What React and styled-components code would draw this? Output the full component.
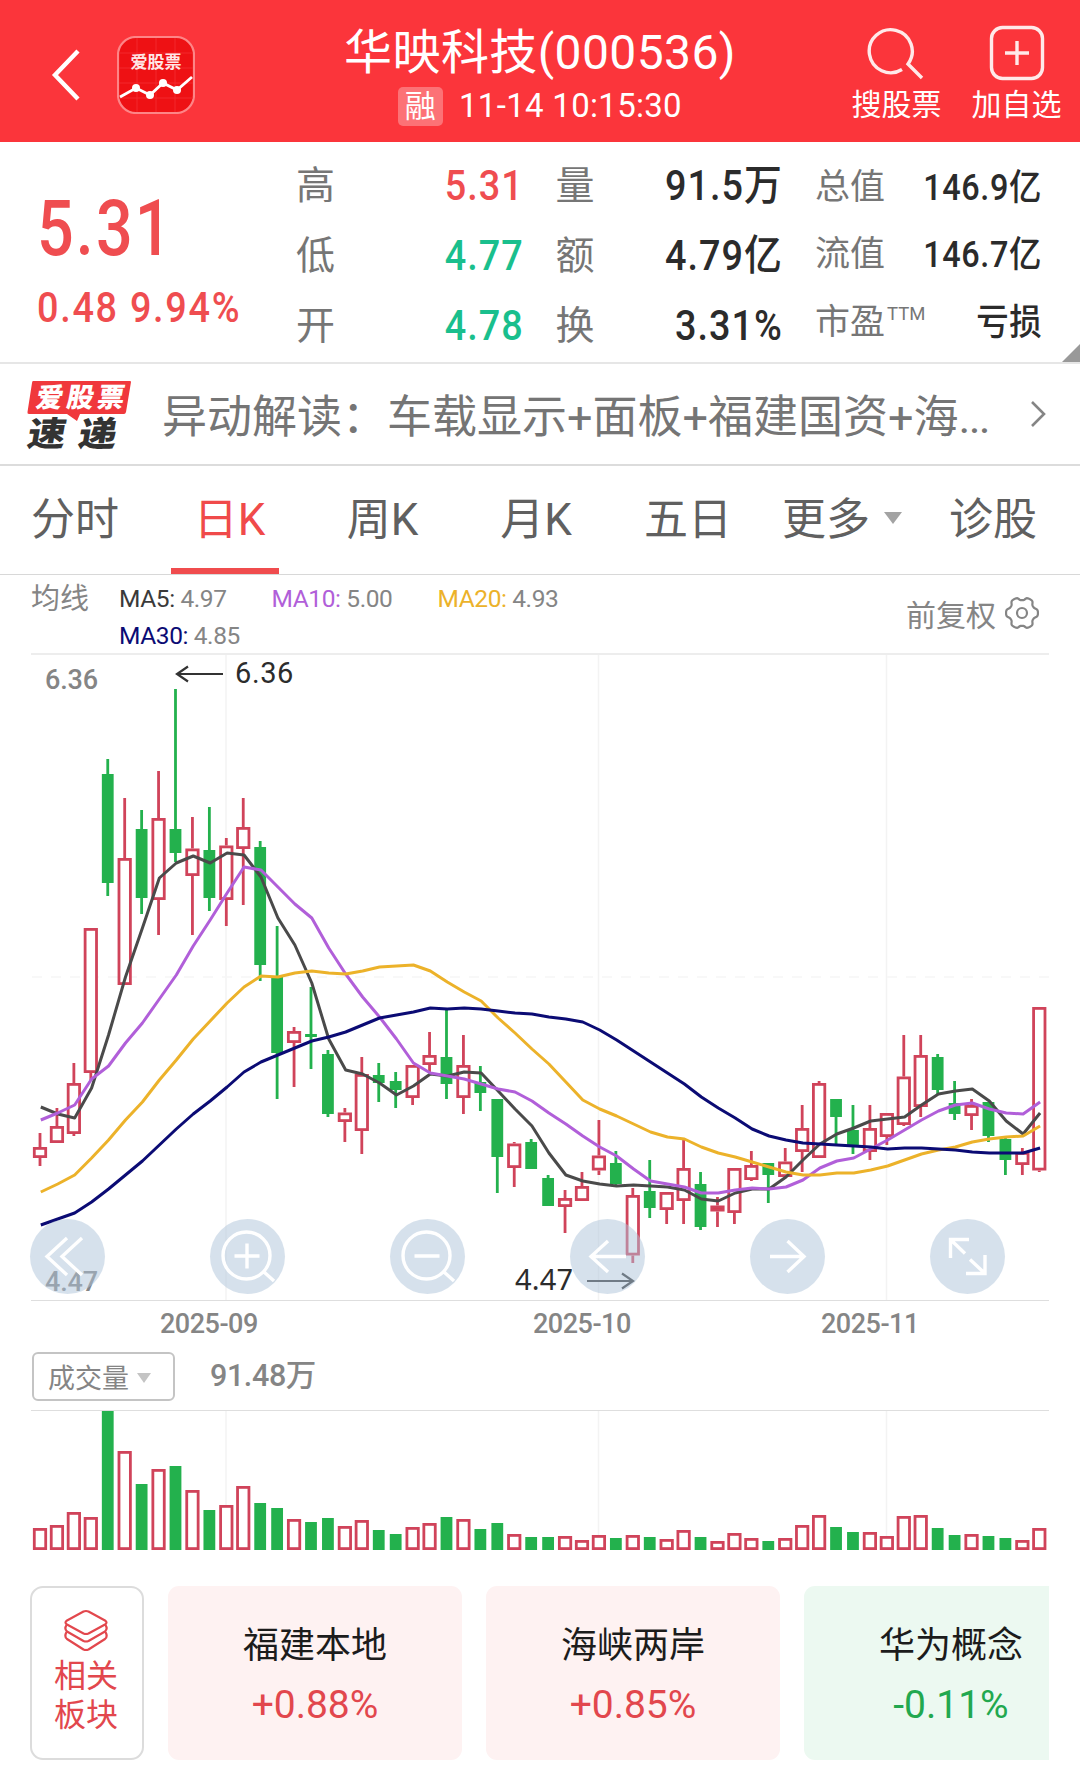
import React from 'react'
import styled, { createGlobalStyle } from 'styled-components'

const GlobalStyle = createGlobalStyle`
  * {
    box-sizing: border-box;
  }
  body {
    margin: 0;
    background: #fff;
    font-family: Roboto, "Noto Sans CJK SC", sans-serif;
  }
`

const UP = '#d0435a'
const DOWN = '#23b14d'

const Page = styled.div`
  width: 1080px;
  height: 1785px;
  overflow: hidden;
  background: #fff;
`

/* ---------- header ---------- */
const Header = styled.header`
  height: 142px;
  background: #fb353b;
  color: #fff;
  display: flex;
  align-items: flex-start;
`
const HeaderLeft = styled.div`
  width: 320px;
  padding: 36px 0 0 51px;
  display: flex;
  align-items: center;
  gap: 36px;
`
const HeaderCenter = styled.div`
  width: 440px;
  padding-top: 24px;
  display: flex;
  flex-direction: column;
  align-items: center;
`
const StockTitle = styled.div`
  font-size: 48px;
  line-height: 58px;
  letter-spacing: 0.4px;
  white-space: nowrap;
`
const StockMeta = styled.div`
  margin-top: 3px;
  display: flex;
  align-items: center;
  gap: 16px;
  font-size: 33px;
  line-height: 42px;
  white-space: nowrap;
  letter-spacing: 0.3px;
`
const Badge = styled.span`
  width: 45px;
  height: 39px;
  border-radius: 5px;
  background: rgba(255, 255, 255, 0.3);
  font-size: 31px;
  line-height: 39px;
  text-align: center;
`
const HeaderRight = styled.div`
  width: 320px;
  padding: 24px 18px 0 0;
  display: flex;
  justify-content: flex-end;
  gap: 29px;
`
const Action = styled.div`
  width: 91px;
  display: flex;
  flex-direction: column;
  align-items: center;
  font-size: 30px;
  line-height: 38px;
  white-space: nowrap;
`
const ActionIcon = styled.svg`
  width: 60px;
  height: 58px;
  margin-bottom: 4px;
`

/* ---------- quote ---------- */
const Quote = styled.section`
  position: relative;
  height: 222px;
  border-bottom: 2px solid #e6e6e6;
  display: flex;
`
const PriceBox = styled.div`
  width: 296px;
  padding: 47px 0 0 37px;
  color: #ef4d50;
`
const Price = styled.div`
  font-size: 77px;
  line-height: 80px;
  font-weight: 500;
  letter-spacing: 2.5px;
  transform: scaleX(0.84);
  transform-origin: left;
`
const Change = styled.div`
  margin-top: 14px;
  font-size: 42px;
  line-height: 50px;
  font-weight: 500;
  letter-spacing: 1.9px;
  white-space: nowrap;
  transform: scaleX(0.9);
  transform-origin: left;
`
const Stats = styled.div`
  display: flex;
  gap: 32px;
`
const StatColumn = styled.div`
  width: 227.5px;
  padding-top: ${(p) => (p.$small ? 12 : 9)}px;
`
const Stat = styled.div`
  height: ${(p) => (p.$small ? 67.5 : 70)}px;
  display: flex;
  justify-content: space-between;
  align-items: center;
  white-space: nowrap;
`
const StatLabel = styled.span`
  color: #767676;
  font-size: ${(p) => (p.$small ? 35 : 39)}px;
  line-height: 50px;
`
const StatValue = styled.span`
  color: ${(p) => p.$color || '#2b2b2b'};
  font-size: ${(p) => (p.$small ? 36 : 42)}px;
  line-height: 50px;
  font-weight: 500;
  letter-spacing: ${(p) => (p.$small ? 0.7 : 1.1)}px;
  transform: scaleX(0.9);
  transform-origin: right;
`
const Ttm = styled.sup`
  font-size: 18.5px;
  line-height: 1;
  vertical-align: 14px;
  margin-left: 2px;
`
const Corner = styled.i`
  position: absolute;
  right: 0;
  bottom: 0;
  border-left: 18px solid transparent;
  border-bottom: 18px solid #999;
`

/* ---------- news ---------- */
const News = styled.section`
  height: 102px;
  border-bottom: 2px solid #dcdcdc;
  padding: 0 33px 0 26px;
  display: flex;
  align-items: center;
`
const NewsLogo = styled.svg`
  width: 108px;
  height: 72px;
  margin-right: 28px;
  flex: none;
  overflow: visible;
`
const NewsText = styled.div`
  flex: 1;
  padding-top: 7px;
  font-size: 45px;
  line-height: 60px;
  color: #757575;
  white-space: nowrap;
`
const Dots = styled.span`
  letter-spacing: -1.8px;
`

/* ---------- tabs ---------- */
const Tabs = styled.nav`
  height: 109px;
  border-bottom: 1px solid #d8d8d8;
  display: grid;
  grid-template-columns: 150px 159px 147px 160px 144px 164px 138px;
`
const Tab = styled.div`
  position: relative;
  display: flex;
  align-items: center;
  justify-content: center;
  padding-bottom: 8px;
  font-size: 44px;
  white-space: nowrap;
  color: ${(p) => (p.$active ? '#f04a4a' : '#606060')};
  &::after {
    content: '';
    display: ${(p) => (p.$active ? 'block' : 'none')};
    position: absolute;
    left: 21px;
    bottom: 0;
    width: 108px;
    height: 6px;
    background: #f04c4e;
  }
`
const Caret = styled.i`
  border: ${(p) => p.$size}px solid transparent;
  border-top: ${(p) => p.$size * 1.4}px solid ${(p) => p.$color};
  border-bottom: 0;
  margin: 4px 0 0 ${(p) => p.$gap}px;
`

/* ---------- moving average legend ---------- */
const Legend = styled.div`
  height: 78px;
  padding: 5px 41px 0 31px;
  display: flex;
  color: #858585;
`
const LegendName = styled.div`
  width: 88px;
  font-size: 29px;
  line-height: 39px;
`
const LegendItems = styled.div`
  width: 560px;
  display: flex;
  flex-wrap: wrap;
  column-gap: 45px;
  font-size: 24.5px;
  line-height: 37px;
  letter-spacing: -0.4px;
`
const MaName = styled.span`
  color: ${(p) => p.$color};
`
const Adjust = styled.div`
  margin-left: auto;
  height: 66px;
  display: flex;
  align-items: center;
  gap: 9px;
  font-size: 30px;
`

/* ---------- charts ---------- */
const ChartBox = styled.div`
  position: relative;
  height: 648px;
`
const ChartSvg = styled.svg`
  display: block;
`
const Tools = styled.div`
  position: absolute;
  left: 30px;
  top: 566px;
  display: flex;
  gap: 105px;
`
const Tool = styled.button`
  width: 75px;
  height: 75px;
  padding: 0;
  border: 0;
  border-radius: 50%;
  background: rgba(173, 195, 217, 0.5);
`
const Dates = styled.div`
  height: 48px;
  padding-left: 160px;
  display: flex;
  color: #858585;
  font-size: 27px;
  font-weight: 500;
  line-height: 46px;
  letter-spacing: -0.5px;
`
const DateLabel = styled.span`
  width: ${(p) => p.$width}px;
`
const VolumeBar = styled.div`
  height: 61px;
  padding: 3px 0 0 32px;
  display: flex;
  align-items: flex-start;
`
const Selector = styled.div`
  width: 143px;
  height: 49px;
  border: 2px solid #c4c4c4;
  border-radius: 6px;
  display: flex;
  align-items: center;
  padding: 0 0 1px 14px;
  color: #858585;
  font-size: 27px;
`
const VolumeValue = styled.div`
  margin-left: 35px;
  font-size: 30.5px;
  line-height: 47px;
  font-weight: 500;
  letter-spacing: -0.4px;
  color: #858585;
`

/* ---------- related sectors ---------- */
const Sectors = styled.section`
  margin: 34px 31px 0 30px;
  display: flex;
  overflow: hidden;
`
const SectorHead = styled.div`
  flex: none;
  width: 114px;
  height: 174px;
  margin-right: 24px;
  border: 2px solid #dcdcdc;
  border-radius: 13px;
  padding: 21px 2px 0 0;
  display: flex;
  flex-direction: column;
  align-items: center;
  color: #e2474d;
  font-size: 32px;
  line-height: 39px;
`
const SectorIcon = styled.svg`
  width: 46px;
  height: 44px;
  margin-bottom: 4px;
`
const Sector = styled.div`
  flex: none;
  width: 294px;
  height: 174px;
  margin-right: 24px;
  border-radius: 11px;
  background: ${(p) => (p.$down ? '#ecf9f1' : '#fef2f2')};
  text-align: center;
  padding-top: 35px;
`
const SectorName = styled.div`
  font-size: 36px;
  line-height: 50px;
  color: #1c1c1c;
`
const SectorChange = styled.div`
  margin-top: 9px;
  font-size: 39px;
  line-height: 50px;
  color: ${(p) => (p.$down ? '#22a84f' : '#e2474d')};
`

// [up, high, body top, body bottom, low, volume bar height]
const candles = [
  [1, 1133, 1147, 1158, 1166, 22],
  [1, 1108, 1126, 1143, 1143, 25],
  [1, 1063, 1083, 1134, 1136, 38],
  [1, 928, 928, 1073, 1080, 33],
  [0, 759, 774, 883, 896, 139],
  [1, 798, 858, 985, 985, 99],
  [0, 810, 829, 898, 914, 66],
  [1, 771, 818, 900, 935, 81],
  [0, 689, 829, 853, 862, 84],
  [1, 817, 848.5, 876, 935, 60],
  [0, 807, 850, 898, 911, 40],
  [1, 838, 845.5, 900, 926, 45],
  [1, 798, 827, 849, 905, 64],
  [0, 841, 847, 965, 981, 47],
  [0, 926, 977, 1053, 1099, 42],
  [1, 1027, 1031, 1043, 1087, 31],
  [0, 987, 1034, 1037, 1069, 28],
  [0, 1050, 1054, 1114, 1117, 32],
  [1, 1108, 1112.5, 1122, 1142, 24],
  [1, 1057, 1074, 1131, 1154, 30],
  [0, 1063, 1075, 1083, 1102, 20],
  [0, 1072, 1081, 1090, 1108, 16],
  [1, 1065, 1065, 1098, 1105, 23],
  [1, 1032, 1055, 1065, 1073, 27],
  [0, 1010, 1057, 1084, 1099, 33],
  [1, 1035, 1065, 1098, 1114, 31],
  [0, 1066, 1082, 1093, 1111, 21],
  [0, 1099, 1099, 1157, 1193, 27],
  [1, 1142, 1143.5, 1168, 1187, 16],
  [0, 1139, 1142, 1169, 1169, 13],
  [0, 1175, 1178, 1206, 1206, 13],
  [1, 1190, 1198, 1207, 1233, 14],
  [1, 1172, 1186, 1201, 1201, 10],
  [1, 1120, 1155.5, 1170.5, 1175, 15],
  [0, 1151, 1163, 1184, 1186, 12],
  [1, 1188, 1195, 1255.5, 1263, 15],
  [0, 1160, 1191, 1208, 1218, 13],
  [1, 1192, 1192, 1210, 1224, 11],
  [1, 1140, 1168, 1201, 1224, 20],
  [0, 1172, 1184, 1227, 1230, 13],
  [1, 1197, 1205.5, 1211.5, 1227, 9],
  [1, 1168, 1168, 1213, 1224, 17],
  [1, 1151, 1165, 1180, 1181, 12],
  [0, 1163, 1163, 1175, 1203, 9],
  [1, 1148, 1161.5, 1177, 1177, 12],
  [1, 1105, 1128, 1152, 1172, 25],
  [1, 1081, 1083, 1158, 1158, 35],
  [0, 1099, 1099, 1117, 1144, 23],
  [0, 1105, 1130, 1146, 1154, 18],
  [1, 1105, 1128, 1152, 1160, 18],
  [1, 1113, 1113, 1137, 1145, 14],
  [1, 1035, 1076.5, 1125, 1126, 34],
  [1, 1035, 1055, 1107, 1117, 35],
  [0, 1054, 1057, 1090, 1094, 22],
  [0, 1081, 1103, 1114, 1120, 15],
  [1, 1099, 1105, 1116, 1130, 16],
  [0, 1102, 1102, 1136, 1142, 14],
  [0, 1136, 1139, 1160, 1175, 12],
  [1, 1148, 1152, 1165, 1175, 10],
  [1, 1007, 1007, 1170.5, 1172, 22],
]

const averages = [
  {
    color: '#4a4a4a',
    y: [1107, 1114, 1118, 1088, 1035, 977, 928, 878, 863, 856, 863, 853, 855, 877, 918, 945, 983, 1039, 1070, 1074,
      1083, 1095, 1086, 1074, 1076, 1072, 1073, 1091, 1109, 1126, 1153, 1175, 1181, 1184, 1186, 1185, 1186, 1187, 1190, 1199,
      1201, 1193, 1189, 1189, 1177, 1160, 1144, 1134, 1128, 1121, 1119, 1117, 1105, 1094, 1091, 1089, 1101, 1121, 1134, 1113],
  },
  {
    color: '#b15fd9',
    y: [1120, 1113, 1105, 1079, 1066, 1043, 1023, 999, 975, 946, 920, 893, 867, 870, 887, 904, 918, 948, 974, 997,
      1017, 1039, 1063, 1073, 1076, 1079, 1084, 1089, 1092, 1101, 1113, 1124, 1136, 1147, 1156, 1169, 1181, 1184, 1187, 1193,
      1193, 1190, 1188, 1189, 1187, 1180, 1168, 1161, 1158, 1149, 1140, 1130, 1120, 1111, 1105, 1103, 1109, 1113, 1114, 1102],
  },
  {
    color: '#ecb22a',
    y: [1192, 1184, 1175, 1158, 1140, 1120, 1102, 1080, 1060, 1039, 1021, 1003, 987, 976, 977, 973, 971, 973, 974, 971,
      967, 966, 965, 971, 982, 992, 1001, 1018, 1033, 1049, 1064, 1082, 1100, 1109, 1116, 1124, 1132, 1137, 1139, 1147,
      1153, 1157, 1162, 1167, 1172, 1175, 1175, 1173, 1173, 1170, 1166, 1160, 1154, 1150, 1147, 1142, 1139, 1137, 1136, 1126],
  },
  {
    color: '#0b0b74',
    y: [1225, 1219, 1213, 1202, 1189, 1175, 1161, 1145, 1129, 1114, 1101, 1087, 1072, 1062, 1055, 1048, 1041, 1037, 1032, 1025,
      1018, 1015, 1012, 1008, 1009, 1008, 1009, 1011, 1013, 1014, 1017, 1019, 1022, 1030, 1040, 1051, 1062, 1073, 1084, 1097,
      1108, 1118, 1129, 1136, 1140, 1143, 1144, 1145, 1146, 1147, 1149, 1148, 1148, 1149, 1150, 1152, 1153, 1153, 1153, 1148],
  },
]

const legend = [
  ['MA5:', '4.97', '#3a3a3a'],
  ['MA10:', '5.00', '#b15fd9'],
  ['MA20:', '4.93', '#ecb22a'],
  ['MA30:', '4.85', '#0b0b74'],
]

const statColumns = [
  {
    rows: [
      { label: '高', value: '5.31', color: '#ef4d50' },
      { label: '低', value: '4.77', color: '#1abf8d' },
      { label: '开', value: '4.78', color: '#1abf8d' },
    ],
  },
  {
    rows: [
      { label: '量', value: '91.5万' },
      { label: '额', value: '4.79亿' },
      { label: '换', value: '3.31%' },
    ],
  },
  {
    small: true,
    rows: [
      { label: '总值', value: '146.9亿' },
      { label: '流值', value: '146.7亿' },
      { label: '市盈', sup: 'TTM', value: '亏损' },
    ],
  },
]

const sectors = [
  { name: '福建本地', change: '+0.88%' },
  { name: '海峡两岸', change: '+0.85%' },
  { name: '华为概念', change: '-0.11%', down: true },
]

const monthLines = [226, 598.5, 886.5]
const cx = (i) => 40 + i * 16.937

// six flat teeth around the centre
const gearPath = () => {
  let d = ''
  for (let a = 0; a < 360; a += 4) {
    const t = (a * Math.PI) / 180
    const r = 14.3 + 1.7 * Math.tanh(1.8 * Math.cos(6 * t) + 0.4)
    d += `${a ? 'L' : 'M'}${(17 + r * Math.cos(t)).toFixed(2)} ${(17 + r * Math.sin(t)).toFixed(2)}`
  }
  return d + 'Z'
}

const AppLogo = () => (
  <svg width="78" height="78" viewBox="0 0 78 78">
    <rect x="1" y="1" width="76" height="76" rx="18" fill="#ee1114" stroke="#fd8587" strokeWidth="2.2" />
    <path d="M20 2V76M39 2V76M58 2V76M2 17H76M2 32H76M2 47H76M2 62H76" stroke="#f3292c" strokeWidth="1" />
    <text x="39" y="32" fill="#ffe6e6" fontSize="17" fontWeight="700" textAnchor="middle">爱股票</text>
    <path d="M3 61L19 52L33 59L46 47L60 54L75 41" fill="none" stroke="#fff" strokeWidth="2.8" />
    <circle cx="19" cy="52" r="4" fill="#fff" />
    <circle cx="33" cy="59" r="4" fill="#fff" />
    <circle cx="46" cy="47" r="4" fill="#fff" />
    <circle cx="60" cy="54" r="4" fill="#fff" />
  </svg>
)

const PriceChart = () => (
  <ChartSvg width="1080" height="648" viewBox="0 653 1080 648">
    <path d="M31 654H1049" stroke="#ededed" strokeWidth="2" />
    <path d="M31 1300.5H1049" stroke="#dedede" />
    {monthLines.map((x) => (
      <path key={x} d={`M${x} 655V1300`} stroke="#f3f3f3" strokeWidth="1.5" />
    ))}
    <path d="M32 977H1049" stroke="#f6f6f6" strokeWidth="1.5" strokeDasharray="10 9" />
    <g fill="#858585" fontSize="27" fontWeight="500">
      <text x="45" y="688.5" textLength="53">6.36</text>
      <text x="45" y="1290.5" textLength="53">4.47</text>
    </g>
    {candles.map(([up, high, top, bottom, low], i) => {
      const x = cx(i)
      return up ? (
        <g key={i} fill="none" stroke={UP} strokeWidth="2.8">
          <path d={`M${x} ${high}V${top}M${x} ${bottom}V${low}`} />
          <rect x={x - 5.7} y={top + 1.4} width="11.4" height={bottom - top - 2.8} fill={i === 40 ? '#e03046' : '#fff'} />
        </g>
      ) : (
        <g key={i} fill={DOWN}>
          <rect x={x - 1.4} y={high} width="2.8" height={low - high} />
          <rect x={x - 5.9} y={top} width="11.8" height={bottom - top} />
        </g>
      )
    })}
    {averages.map((ma) => (
      <polyline
        key={ma.color}
        points={ma.y.map((y, i) => `${cx(i) + 0.8},${y}`).join(' ')}
        fill="none"
        stroke={ma.color}
        strokeWidth="3"
        strokeLinejoin="round"
      />
    ))}
    <g fill="none" stroke="#333" strokeWidth="2.2">
      <path d="M223 674H177M188 666.5L177 674L188 681.5" />
      <path d="M587 1281H633M622 1273.5L633 1281L622 1288.5" />
    </g>
    <g fill="#2c2c2c" fontSize="29">
      <text x="235" y="683" letterSpacing="0.6">6.36</text>
      <text x="515" y="1290" letterSpacing="0.2" fontFamily="Noto Sans">4.47</text>
    </g>
  </ChartSvg>
)

const VolumeChart = () => (
  <ChartSvg width="1080" height="142" viewBox="0 1410 1080 142">
    <path d="M31 1410.5H1049" stroke="#dedede" />
    {monthLines.map((x) => (
      <path key={x} d={`M${x} 1411V1550`} stroke="#f3f3f3" strokeWidth="1.5" />
    ))}
    {candles.map((c, i) =>
      c[0] ? (
        <rect key={i} x={cx(i) - 5.7} y={1551.4 - c[5]} width="11.4" height={c[5] - 2.8} fill="#fff" stroke={UP} strokeWidth="2.8" />
      ) : (
        <rect key={i} x={cx(i) - 5.9} y={1550 - c[5]} width="11.8" height={c[5]} fill={DOWN} />
      )
    )}
  </ChartSvg>
)

const toolPaths = [
  'M37 19L17 37.5L37 56M52 19L32 37.5L52 56',
  'M60 36.5A23.5 23.5 0 1 1 13 36.5A23.5 23.5 0 1 1 60 36.5ZM54 53L64 62M24.5 37H49.5M37 24.5V49.5',
  'M60 36.5A23.5 23.5 0 1 1 13 36.5A23.5 23.5 0 1 1 60 36.5ZM54 53L64 62M24.5 37H49.5',
  'M56 37.5H21M38 22L21 37.5L38 53',
  'M20 37.5H54M37.5 22L54 37.5L37.5 53',
  'M20.5 39V20.5H39M20.5 20.5L35 34.5M55 36V54.5H36M55 54.5L40 40.5',
]

const App = () => {
  return (
    <>
      <GlobalStyle />
      <Page>
        <Header>
          <HeaderLeft>
            <svg width="30" height="54" viewBox="0 0 30 54" fill="none" stroke="#fff" strokeWidth="4.4">
              <path d="M27 3L4 27L27 51" />
            </svg>
            <AppLogo />
          </HeaderLeft>
          <HeaderCenter>
            <StockTitle>华映科技(000536)</StockTitle>
            <StockMeta>
              <Badge>融</Badge>
              <span>11-14 10:15:30</span>
            </StockMeta>
          </HeaderCenter>
          <HeaderRight>
            <Action>
              <ActionIcon viewBox="0 0 60 58" fill="none" stroke="#ffe9e9" strokeWidth="3.4">
                <path d="M35 45.500A21.500 21.500 0 1 1 41 40L55 54" />
              </ActionIcon>
              搜股票
            </Action>
            <Action>
              <ActionIcon viewBox="0 0 60 58" fill="none" stroke="#ffe9e9" strokeWidth="3.4">
                <rect x="4.5" y="3.5" width="51" height="51" rx="11" />
                <path d="M30 17V41M18 29H42" />
              </ActionIcon>
              加自选
            </Action>
          </HeaderRight>
        </Header>

        <Quote>
          <PriceBox>
            <Price>5.31</Price>
            <Change>0.48 9.94%</Change>
          </PriceBox>
          <Stats>
            {statColumns.map(({ small, rows }, i) => (
              <StatColumn key={i} $small={small}>
                {rows.map((s) => (
                  <Stat key={s.label} $small={small}>
                    <StatLabel $small={small}>
                      {s.label}
                      {s.sup && <Ttm>{s.sup}</Ttm>}
                    </StatLabel>
                    <StatValue $small={small} $color={s.color}>{s.value}</StatValue>
                  </Stat>
                ))}
              </StatColumn>
            ))}
          </Stats>
          <Corner />
        </Quote>

        <News>
          <NewsLogo viewBox="0 0 108 72">
            <path d="M7 3H104Q105 3 105 4L100 34Q99.500 36 98 36H54L51 43L41 36H3Q1 36 1.500 34L6 5Q6.200 3 7 3Z" fill="#f0383c" />
            <g fontWeight="900" transform="skewX(-10)">
              <text x="14" y="29" fill="#fff" fontSize="27" textLength="88">爱股票</text>
              <text x="12" y="68" fill="#333" fontSize="34" textLength="38" lengthAdjust="spacingAndGlyphs">速</text>
              <text x="63" y="68" fill="#333" fontSize="34" textLength="38" lengthAdjust="spacingAndGlyphs">递</text>
            </g>
          </NewsLogo>
          <NewsText>
            异动解读：车载显示+面板+福建国资+海<Dots>...</Dots>
          </NewsText>
          <svg width="17" height="30" viewBox="0 0 17 30" fill="none" stroke="#858585" strokeWidth="2.6">
            <path d="M2 3L14 15L2 27" />
          </svg>
        </News>

        <Tabs>
          <Tab>分时</Tab>
          <Tab $active>日K</Tab>
          <Tab>周K</Tab>
          <Tab>月K</Tab>
          <Tab>五日</Tab>
          <Tab>
            更多
            <Caret $size={9} $color="#a3a3a3" $gap={14} />
          </Tab>
          <Tab>诊股</Tab>
        </Tabs>

        <Legend>
          <LegendName>均线</LegendName>
          <LegendItems>
            {legend.map(([name, value, color]) => (
              <span key={name}>
                <MaName $color={color}>{name}</MaName> {value}
              </span>
            ))}
          </LegendItems>
          <Adjust>
            前复权
            <svg width="34" height="34" viewBox="0 0 34 34" fill="none" stroke="#858585" strokeWidth="2.2">
              <path d={gearPath()} />
              <circle cx="17" cy="17" r="5" />
            </svg>
          </Adjust>
        </Legend>

        <ChartBox>
          <PriceChart />
          <Tools>
            {toolPaths.map((d) => (
              <Tool key={d}>
                <svg width="75" height="75" viewBox="0 0 75 75" fill="none" stroke="#fff" strokeWidth="3.4">
                  <path d={d} />
                </svg>
              </Tool>
            ))}
          </Tools>
        </ChartBox>

        <Dates>
          <DateLabel $width={373}>2025-09</DateLabel>
          <DateLabel $width={288}>2025-10</DateLabel>
          <DateLabel $width={120}>2025-11</DateLabel>
        </Dates>
        <VolumeBar>
          <Selector>
            成交量
            <Caret $size={7.5} $color="#c4c4c4" $gap={8} />
          </Selector>
          <VolumeValue>91.48万</VolumeValue>
        </VolumeBar>
        <VolumeChart />

        <Sectors>
          <SectorHead>
            <SectorIcon viewBox="0 0 46 44" fill="none" stroke="#e2474d" strokeWidth="2.2" strokeLinejoin="round">
              <path d="M20.500 2.500Q23 1.500 25.500 2.500L42 11.500Q45 13.500 42 15.500L25.500 24.500Q23 25.500 20.500 24.500L4 15.500Q1 13.500 4 11.500Z" />
              <path d="M3.500 16Q1 20 4 22.500L20.500 32Q23 33 25.500 32L42 22.500Q45 20 42.500 16" />
              <path d="M3.500 23Q1 27.500 4 30L20.500 40.500Q23 41.500 25.500 40.500L42 30Q45 27.500 42.500 23" />
            </SectorIcon>
            <span>相关</span>
            <span>板块</span>
          </SectorHead>
          {sectors.map((s) => (
            <Sector key={s.name} $down={s.down}>
              <SectorName>{s.name}</SectorName>
              <SectorChange $down={s.down}>{s.change}</SectorChange>
            </Sector>
          ))}
        </Sectors>
      </Page>
    </>
  )
}

export default App
